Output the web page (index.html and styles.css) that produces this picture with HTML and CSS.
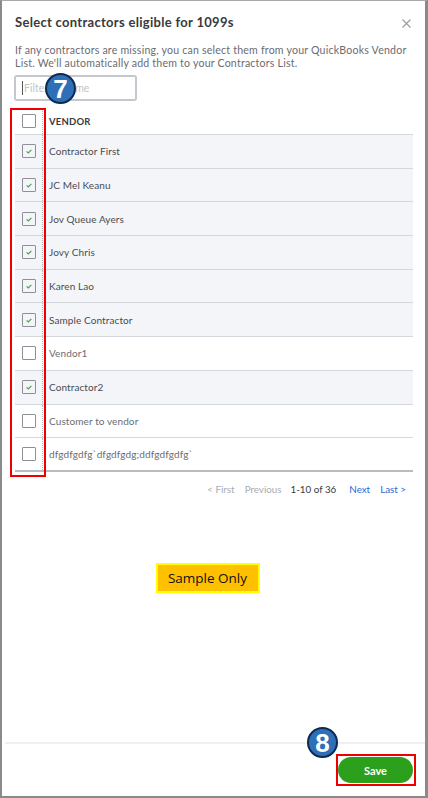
FILE: index.html
```html
<!DOCTYPE html>
<html>
<head>
<meta charset="utf-8">
<link rel="stylesheet" href="styles.css">
</head>
<body>
<div class="dialog">
  <div class="header">
    <div class="title">Select contractors eligible for 1099s</div>
    <svg class="close" width="9" height="9" viewBox="0 0 9 9"><path d="M0.5 0.5 L8.5 8.5 M8.5 0.5 L0.5 8.5" stroke="#9a9ca2" stroke-width="1.1" fill="none"/></svg>
  </div>
  <p class="desc">If any contractors are missing, you can select them from your QuickBooks Vendor List. We'll automatically add them to your Contractors List.</p>
  <div class="filter"><span class="caret"></span><span class="ph">Filter by name</span></div>
  <div class="table">
    <div class="row head"><div class="cb-cell"><span class="cb"></span></div><div class="name">VENDOR</div></div>
    <div class="row on"><div class="cb-cell"><span class="cb"><svg viewBox="0 0 12 12"><path d="M3.6 6.4 L5.3 8 L8.4 4.8" fill="none" stroke="#4e9f5c" stroke-width="1.2"/></svg></span></div><div class="name">Contractor First</div></div>
    <div class="row on"><div class="cb-cell"><span class="cb"><svg viewBox="0 0 12 12"><path d="M3.6 6.4 L5.3 8 L8.4 4.8" fill="none" stroke="#4e9f5c" stroke-width="1.2"/></svg></span></div><div class="name">JC Mel Keanu</div></div>
    <div class="row on"><div class="cb-cell"><span class="cb"><svg viewBox="0 0 12 12"><path d="M3.6 6.4 L5.3 8 L8.4 4.8" fill="none" stroke="#4e9f5c" stroke-width="1.2"/></svg></span></div><div class="name">Jov Queue Ayers</div></div>
    <div class="row on"><div class="cb-cell"><span class="cb"><svg viewBox="0 0 12 12"><path d="M3.6 6.4 L5.3 8 L8.4 4.8" fill="none" stroke="#4e9f5c" stroke-width="1.2"/></svg></span></div><div class="name">Jovy Chris</div></div>
    <div class="row on"><div class="cb-cell"><span class="cb"><svg viewBox="0 0 12 12"><path d="M3.6 6.4 L5.3 8 L8.4 4.8" fill="none" stroke="#4e9f5c" stroke-width="1.2"/></svg></span></div><div class="name">Karen Lao</div></div>
    <div class="row on"><div class="cb-cell"><span class="cb"><svg viewBox="0 0 12 12"><path d="M3.6 6.4 L5.3 8 L8.4 4.8" fill="none" stroke="#4e9f5c" stroke-width="1.2"/></svg></span></div><div class="name">Sample Contractor</div></div>
    <div class="row"><div class="cb-cell"><span class="cb"></span></div><div class="name light">Vendor1</div></div>
    <div class="row on"><div class="cb-cell"><span class="cb"><svg viewBox="0 0 12 12"><path d="M3.6 6.4 L5.3 8 L8.4 4.8" fill="none" stroke="#4e9f5c" stroke-width="1.2"/></svg></span></div><div class="name">Contractor2</div></div>
    <div class="row"><div class="cb-cell"><span class="cb"></span></div><div class="name light">Customer to vendor</div></div>
    <div class="row last"><div class="cb-cell"><span class="cb"></span></div><div class="name light">dfgdfgdfg`dfgdfgdg;ddfgdfgdfg`</div></div>
    <div class="redbox"></div>
    <div class="badge b7">7</div>
  </div>
  <div class="pager">
    <span class="dis">&lt; First</span>
    <span class="dis">Previous</span>
    <span class="count">1-10 of 36</span>
    <span class="link">Next</span>
    <span class="link">Last &gt;</span>
  </div>
  <div class="spacer">
    <div class="sample">Sample Only</div>
  </div>
  <div class="footer">
    <div class="badge b8">8</div>
    <span class="savewrap"><button class="save">Save</button></span>
  </div>
</div>
</body>
</html>
```
FILE: styles.css
```css
html, body { margin: 0; padding: 0; background: #fff; }
body { width: 428px; height: 798px; overflow: hidden; font-family: Lato, "Open Sans", sans-serif; }
.dialog {
  box-sizing: border-box;
  width: 428px;
  height: 798px;
  border-top: 1px solid #a8a8a8;
  border-left: 2px solid #8a8a8a;
  border-right: 3px solid #8a8a8a;
  border-bottom: 2px solid #8a8a8a;
  display: flex;
  flex-direction: column;
  background: #fff;
  position: relative;
}
.header {
  display: flex;
  align-items: center;
  justify-content: space-between;
  padding: 12px 13px 0 13px;
  height: 18px;
}
.title { font-weight: 700; font-size: 13px; color: #393a3d; line-height: 18px; letter-spacing: 0.3px; }
.close { margin-right: 1px; margin-top: 2px; }
.desc {
  margin: 13px 13px 0 13px;
  font-size: 10.6px;
  line-height: 12.5px;
  letter-spacing: 0.2px;
  color: #6b6c72;
}
.filter {
  margin: 6px 0 0 12px;
  box-sizing: border-box;
  width: 123px;
  height: 26px;
  border: 2px solid #c4c7cd;
  border-radius: 3px;
  display: flex;
  align-items: center;
  padding-left: 6px;
}
.caret { width: 1px; height: 14px; background: #555; margin-right: 1px; }
.ph { font-size: 10.5px; color: #c2c4c8; }
.table {
  position: relative;
  margin: 7px 12px 0 13px;
}
.row {
  box-sizing: border-box;
  height: 33.7px;
  display: flex;
  align-items: center;
  border-bottom: 1px solid #d4d7dc;
  background: #fff;
}
.row.head { height: 27px; }
.row.on { background: #f4f5f8; }
.row.last { border-bottom: 2px solid #b9bbbf; height: 34px; }
.cb-cell {
  box-sizing: border-box;
  width: 28px;
  height: 100%;
  display: flex;
  align-items: center;
  padding-left: 7px;
  border-right: 1px dotted #b7b9bd;
}
.cb {
  box-sizing: border-box;
  width: 14px;
  height: 14px;
  border: 1px solid #8d9096;
  border-radius: 1px;
  background: #fff;
  display: block;
}
.row.on .cb { background: #f4f5f8; }
.cb svg { display: block; width: 12px; height: 12px; }
.name { padding-left: 6px; font-size: 10px; color: #4a4b50; letter-spacing: 0.1px; }
.name.light { color: #6b6c72; }
.head .name { font-weight: 700; font-size: 9.5px; color: #393a3d; letter-spacing: 0.2px; }
.redbox {
  position: absolute;
  left: -5px;
  top: 0;
  width: 32px;
  height: 365px;
  border: 2px solid #ee0000;
}
.badge {
  position: absolute;
  box-sizing: border-box;
  width: 31px;
  height: 31px;
  border-radius: 50%;
  background: #2e6fb6;
  border: 2px solid #0d2a55;
  color: #fff;
  font-family: "Liberation Sans", Arial, sans-serif;
  font-weight: 700;
  font-size: 26px;
  line-height: 28px;
  text-align: center;
}
.b7 { left: 30px; top: -35px; }
.b8 { left: 302px; top: -17px; }
.pager {
  display: flex;
  justify-content: flex-end;
  align-items: center;
  margin: 10px 19px 0 0;
  font-size: 9.8px;
  height: 14px;
}
.pager span { margin-left: 10px; }
.pager .count { margin-left: 9px; margin-right: 3px; color: #393a3d; }
.dis { color: #a9acb2; }
.link { color: #2a6ad6; }
.spacer { flex: 1; display: flex; justify-content: center; align-items: flex-start; }
.sample {
  margin-top: 67px;
  margin-left: -12px;
  box-sizing: border-box;
  width: 104px;
  height: 30px;
  background: #ffc000;
  border: 2px solid #ffff00;
  font-family: "Open Sans", sans-serif;
  font-size: 13.5px;
  color: #111;
  display: flex;
  align-items: center;
  justify-content: center;
}
.footer {
  position: relative;
  margin-left: 3px;
  border-top: 2px solid #eef0f3;
  display: flex;
  justify-content: flex-end;
  padding: 10px 9px 10px 0;
}
.savewrap {
  display: block;
  border: 2px solid #ee0000;
  padding: 1px 1px 1px 0;
}
.save {
  display: block;
  width: 75px;
  height: 26px;
  border: none;
  border-radius: 13px;
  background: #2ca01c;
  color: #fff;
  font-family: Lato, "Open Sans", sans-serif;
  font-weight: 700;
  font-size: 11px;
  padding: 0;
}
```
